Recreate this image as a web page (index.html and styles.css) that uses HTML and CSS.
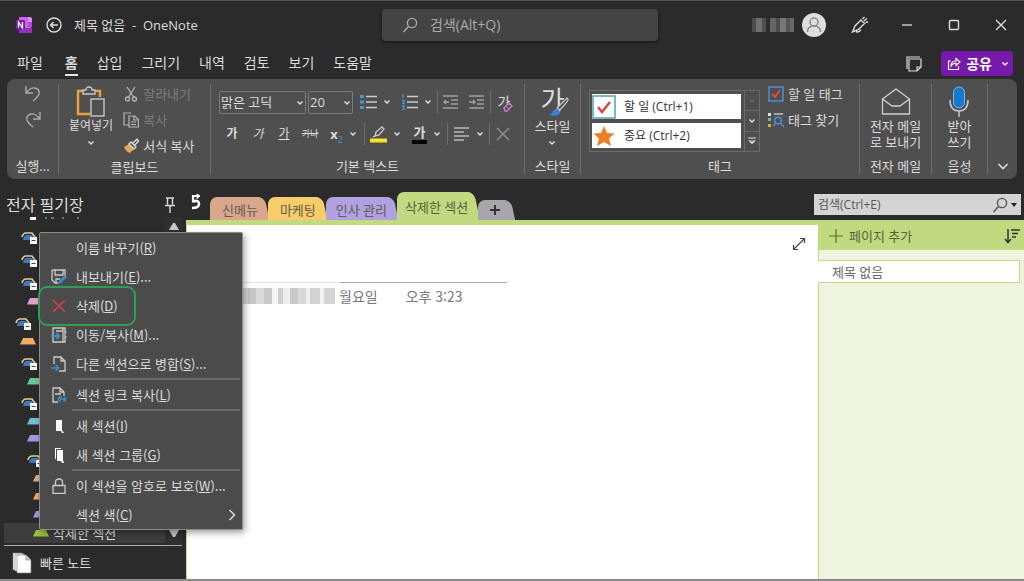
FILE: index.html
```html
<!DOCTYPE html>
<html lang="ko">
<head>
  <meta charset="UTF-8" />
  <title>제목 없음 - OneNote</title>
  <link rel="stylesheet" href="styles.css">
</head>
<body>

  <!-- shared symbols -->
  <svg class="defs" aria-hidden="true">
    <symbol id="chev" viewBox="0 0 8 8"><path d="M1.5 2.5 4 5l2.5-2.5" fill="none" stroke="currentColor" stroke-width="1.5"/></symbol>
    <symbol id="lens" viewBox="0 0 16 16"><circle cx="10" cy="6" r="4.6" fill="none" stroke="currentColor" stroke-width="1.4"/><path d="M6.7 9.3 1.5 15" fill="none" stroke="currentColor" stroke-width="1.5"/></symbol>
    <symbol id="group" viewBox="0 0 16 14"><path d="M1 6q1-4 4-4h6l3 4" fill="none" stroke="#e2cf8c" stroke-width="1.6"/><path d="M2 9q1-5 4-5h5l3 5z" fill="#3f78bd"/><rect x="9" y="6" width="7" height="7" fill="#fff"/><path d="M10.500 9.500h4" stroke="#444"/></symbol>
    <symbol id="section" viewBox="0 0 16 8"><path d="M0 7.500 3 1h10l3 6.500z" fill="currentColor"/></symbol>
  </svg>

  <div class="window">
    <header class="titlebar">
      <div class="title-left">
        <svg width="16" height="16" viewBox="0 0 16 16"><rect x="3" width="12" height="16" rx="1" fill="#ca64ea"/><path d="M12 0h2q2 0 2 2v3h-4z" fill="#d98df0"/><path d="M12 5h4v5h-4z" fill="#ae4bd5"/><path d="M3 11h13v4q0 1-1 1H4q-1 0-1-1z" fill="#9332bf"/><rect y="3" width="9" height="10" rx="1" fill="#7719aa"/><path d="M2.500 11V5l4 6V5" fill="none" stroke="#fff" stroke-width="1.300"/></svg>
        <button class="back" aria-label="뒤로"><svg width="16" height="16" viewBox="0 0 16 16" fill="none" stroke="currentColor" stroke-width="1.400"><circle cx="8" cy="8" r="7"/><path d="M12 8H4.500M7.500 5l-3 3 3 3"/></svg></button>
        <span>제목 없음 &nbsp;-&nbsp; OneNote</span>
      </div>
      <label class="top-search">
        <svg width="16" height="16"><use href="#lens"/></svg>
        <input type="text" placeholder="검색(Alt+Q)" aria-label="검색">
      </label>
      <div class="title-right">
        <span class="user-name"></span>
        <svg class="avatar" width="24" height="24" viewBox="0 0 24 24"><circle cx="12" cy="12" r="12" fill="#dedede"/><g fill="none" stroke="#8a8a8a" stroke-width="1.500"><circle cx="12" cy="9" r="4"/><path d="M5.500 19q0-6 6.500-6t6.500 6"/></g></svg>
        <button aria-label="펜"><svg width="18" height="18" viewBox="0 0 18 18" fill="none" stroke="currentColor" stroke-width="1.400"><path d="M1.500 16 4 10l6-6 3.500 3.500-6 6zM5 15.500q3 1.500 5-2M11.500 3l2-2M13 5l3-2.500M14.500 6.500 17 6"/></svg></button>
        <button aria-label="최소화"><svg width="12" height="12"><path d="M1 6h10" stroke="currentColor" stroke-width="1.300"/></svg></button>
        <button aria-label="최대화"><svg width="12" height="12"><rect x="1.500" y="1.500" width="9" height="9" rx="1" fill="none" stroke="currentColor" stroke-width="1.400"/></svg></button>
        <button aria-label="닫기"><svg width="12" height="12"><path d="m1 1 10 10M11 1 1 11" stroke="currentColor" stroke-width="1.400"/></svg></button>
      </div>
    </header>

    <nav class="menubar">
      <a href="#">파일</a>
      <a href="#" class="active">홈</a>
      <a href="#">삽입</a>
      <a href="#">그리기</a>
      <a href="#">내역</a>
      <a href="#">검토</a>
      <a href="#">보기</a>
      <a href="#">도움말</a>
      <button class="feed" aria-label="메모"><svg width="16" height="16" viewBox="0 0 16 16" fill="none" stroke="currentColor" stroke-width="1.200"><path d="M1 13V1h13"/><path d="M3 3h12v8l-4 4H3zM15 11h-4v4"/></svg></button>
      <button class="share"><svg width="14" height="14" viewBox="0 0 14 14" fill="none" stroke="currentColor" stroke-width="1.200"><path d="M4 4H1.500v8.500h10V9M4 9q0-5 5-5V1.500L13 5 9 8.500V6Q6 6 4 9z"/></svg>공유<svg class="share-chev" width="8" height="8"><use href="#chev"/></svg></button>
    </nav>

    <section class="ribbon">
      <div class="group undo-group">
        <div class="tools undo-tools">
          <button class="dim" aria-label="실행 취소"><svg width="16" height="18" viewBox="0 0 16 18" fill="none" stroke="currentColor" stroke-width="1.400"><path d="M1 1v7h7M1.500 7.500Q6 2 10 3q5 1.500 4 6-1 3-6 7"/></svg></button>
          <button class="dim" aria-label="다시 실행"><svg width="16" height="18" viewBox="0 0 16 18" fill="none" stroke="currentColor" stroke-width="1.400"><path d="M15 1v7H8M14.500 7.500Q10 2 6 3 1 4.500 2 9q1 3 6 7"/></svg></button>
        </div>
        <div class="caption">실행...</div>
      </div>

      <div class="group clip-group">
        <div class="tools">
          <button class="big paste"><svg width="30" height="32" viewBox="0 0 30 32" fill="none"><path d="M7 5H2v23h12M19 5h5v6" stroke="#e8a33d" stroke-width="2.400"/><path d="M7 8V4h3q0-3 3-3t3 3h3v4z" stroke="#c8c8c8" stroke-width="1.300"/><rect x="15" y="13" width="13" height="17" stroke="#c8c8c8" stroke-width="1.400"/></svg><span>붙여넣기</span><svg width="8" height="8"><use href="#chev"/></svg></button>
          <div class="rows">
            <button class="row-btn off"><svg width="16" height="16" viewBox="0 0 16 16" fill="none" stroke="#b5b5b5" stroke-width="1.300"><path d="m4 1 6.500 10M12 1 5.500 11"/><circle cx="4.500" cy="13" r="2"/><circle cx="11.500" cy="13" r="2"/></svg>잘라내기</button>
            <button class="row-btn off"><svg width="16" height="16" viewBox="0 0 16 16" fill="none" stroke="#b5b5b5" stroke-width="1.200"><path d="M6 13H1V1h7M6 4h6l3.500 3.500V15H6zM11 4v4h4M8 10h5M8 12.500h5"/></svg>복사</button>
            <button class="row-btn"><svg width="16" height="16" viewBox="0 0 16 16"><path d="m1 9 5-3 5 5-4 4Q3 14 1 9z" fill="#e9a45a"/><path d="M6 6 8 4l5 5-2 2zM10 5l4-4 1.500 2L12 7" fill="none" stroke="#ddd" stroke-width="1.300"/></svg>서식 복사</button>
          </div>
        </div>
        <div class="caption">클립보드</div>
      </div>

      <div class="group text-group">
        <div class="tools text-tools">
          <div class="line">
            <span class="pick font"><select aria-label="글꼴"><option>맑은 고딕</option></select><svg width="8" height="8"><use href="#chev"/></svg></span>
            <span class="pick size"><select aria-label="글꼴 크기"><option>20</option></select><svg width="8" height="8"><use href="#chev"/></svg></span>
            <button class="split" aria-label="글머리 기호"><svg width="17" height="16" viewBox="0 0 17 16"><path d="M0 1h4v3H0zM0 6.500h4v3H0zM0 12h4v3H0z" fill="#4a94d0"/><path d="M6 2.500h11M6 8h11M6 13.500h11" stroke="#ccc" stroke-width="1.400"/></svg><svg width="8" height="8"><use href="#chev"/></svg></button>
            <button class="split" aria-label="번호 매기기"><svg width="17" height="16" viewBox="0 0 17 16"><path d="M2 0v4M1 6.500h2v3H1M1 12h2v3.500H1" fill="none" stroke="#4a94d0" stroke-width="1.400"/><path d="M6 2.500h11M6 8h11M6 13.500h11" stroke="#ccc" stroke-width="1.400"/></svg><svg width="8" height="8"><use href="#chev"/></svg></button>
            <i class="bar"></i>
            <button class="tool" aria-label="내어쓰기"><svg width="16" height="14" viewBox="0 0 16 14" fill="none" stroke="#a0a0a0" stroke-width="1.300"><path d="M0 1h15M8 5h7M8 9h7M0 13h15M6 7H1M3 5 1 7l2 2"/></svg></button>
            <button class="tool" aria-label="들여쓰기"><svg width="16" height="14" viewBox="0 0 16 14" fill="none" stroke="#a0a0a0" stroke-width="1.300"><path d="M0 1h15M8 5h7M8 9h7M0 13h15M0 7h6M4 5l2 2-2 2"/></svg></button>
            <i class="bar"></i>
            <button class="tool clear" aria-label="서식 지우기">가<svg width="10" height="10" viewBox="0 0 10 10"><path d="m1 6 5-5 3 3-5 5H2z" fill="#4f4f4f" stroke="#c07bd0" stroke-width="1.500"/><path d="m3 4 3 3" stroke="#c07bd0"/></svg></button>
          </div>
          <div class="line">
            <button class="tool"><b>가</b></button>
            <button class="tool"><em>가</em></button>
            <button class="tool"><u>가</u></button>
            <button class="tool tiny"><s>가나</s></button>
            <button class="split sub"><span><b>x</b><sub>2</sub></span><svg width="8" height="8"><use href="#chev"/></svg></button>
            <i class="bar"></i>
            <button class="split" aria-label="강조색"><svg width="17" height="17" viewBox="0 0 17 17"><path d="m5 10 1-4 6-5 2 2-5 6-4 1zM3 11l2-1" fill="none" stroke="#ccc" stroke-width="1.300"/><path d="M0 12.500h17v4H0z" fill="#f5e61c"/></svg><svg width="8" height="8"><use href="#chev"/></svg></button>
            <button class="split color"><span>가</span><svg width="8" height="8"><use href="#chev"/></svg></button>
            <i class="bar"></i>
            <button class="split" aria-label="맞춤"><svg width="17" height="16" viewBox="0 0 17 16"><path d="M1 2h15M1 6h10M1 10h15M1 14h10" stroke="#bbb" stroke-width="1.400"/></svg><svg width="8" height="8"><use href="#chev"/></svg></button>
            <i class="bar"></i>
            <button class="tool" aria-label="삭제"><svg width="14" height="14"><path d="m1 1 12 12M13 1 1 13" stroke="#929292" stroke-width="1.400"/></svg></button>
          </div>
        </div>
        <div class="caption">기본 텍스트</div>
      </div>

      <div class="group style-group">
        <div class="tools">
          <button class="big"><span class="style-icon">가<svg width="20" height="20" viewBox="0 0 20 20"><path d="M8 11 18 1q2 1 0 4l-7 8z" fill="#4f4f4f" stroke="#ccc" stroke-width="1.200"/><path d="M0 18q3-1 4-4 2-4 6-1 2 3-1 5-3 2-9 0z" fill="#3583cd"/></svg></span><span>스타일</span><svg width="8" height="8"><use href="#chev"/></svg></button>
        </div>
        <div class="caption">스타일</div>
      </div>

      <div class="group tag-group">
        <div class="tools tag-tools">
          <div class="gallery">
            <div class="gallery-items">
              <button><svg width="24" height="24" viewBox="0 0 24 24"><rect x="1" y="1" width="22" height="22" fill="#fff" stroke="#4fa3ae" stroke-width="1.500"/><path d="m6 12 4 5 8-10" fill="none" stroke="#d64545" stroke-width="2.400"/></svg>할 일 (Ctrl+1)</button>
              <button><svg width="24" height="24" viewBox="0 0 24 24"><path d="m12 2 3 7 7.500.5-5.500 5 2 7.500-7-4-7 4 2-7.500-5.500-5L9 9z" fill="#ee8022"/></svg>중요 (Ctrl+2)</button>
            </div>
            <div class="gallery-nav">
              <button class="off" aria-label="위"><svg width="8" height="8"><path d="M2 5l2-2 2 2" fill="none" stroke="currentColor"/></svg></button>
              <button aria-label="아래"><svg width="8" height="8"><use href="#chev"/></svg></button>
              <button aria-label="더 보기"><svg width="8" height="8" viewBox="0 0 8 8"><path d="M0 1h8M1.500 4h5L4 6.500z" fill="none" stroke="currentColor" stroke-width="1.200"/></svg></button>
            </div>
          </div>
          <div class="rows">
            <button class="row-btn"><svg width="16" height="16" viewBox="0 0 16 16" fill="none"><rect x="1" y="1" width="14" height="14" stroke="#4a90d9" stroke-width="1.500"/><path d="m4 8 3 3 5-7" stroke="#d9503f" stroke-width="2"/></svg>할 일 태그</button>
            <button class="row-btn"><svg width="16" height="16" viewBox="0 0 16 16"><path d="M0 1h3v3H0z" fill="#ddd"/><path d="M0 6h3v3H0z" fill="#6db5a5"/><path d="M0 12h3v3H0z" fill="#e8a33d"/><path d="M6 2h9" stroke="#ccc" stroke-width="1.400"/><circle cx="10" cy="8.500" r="3.300" fill="none" stroke="#4a90d9" stroke-width="1.500"/><path d="m12.500 11 3.500 4M5 14l3-3" stroke="#4a90d9" stroke-width="1.500"/></svg>태그 찾기</button>
          </div>
        </div>
        <div class="caption">태그</div>
      </div>

      <div class="group mail-group">
        <div class="tools">
          <button class="big"><svg width="30" height="32" viewBox="0 0 30 32" fill="none" stroke="#d0d0d0" stroke-width="1.300"><path d="M1.500 13 15 3l13.500 10v15h-27zM1.500 13 11 20h8l9.500-7"/></svg><span>전자 메일<br>로 보내기</span></button>
        </div>
        <div class="caption">전자 메일</div>
      </div>

      <div class="group voice-group">
        <div class="tools">
          <button class="big"><svg width="22" height="32" viewBox="0 0 22 32"><rect x="5.500" y="1" width="11" height="21" rx="5.500" fill="#1678cf" stroke="#7fb6e6"/><path d="M2 14q0 11 9 11t9-11M11 25v6" fill="none" stroke="#c8c8c8" stroke-width="1.500"/></svg><span>받아<br>쓰기</span></button>
        </div>
        <div class="caption">음성</div>
      </div>

      <button class="collapse" aria-label="리본 축소"><svg width="12" height="12" viewBox="0 0 12 12"><path d="m1.500 4 4.500 4.500L10.500 4" fill="none" stroke="currentColor" stroke-width="1.600"/></svg></button>
    </section>

    <div class="workspace">
      <aside class="sidebar">
        <div class="side-head">
          <h1>전자 필기장</h1>
          <svg width="12" height="16" viewBox="0 0 12 16" fill="none" stroke="currentColor" stroke-width="1.400"><path d="M2 1h8M3.500 1v6.500M8.500 1v6.500M1 8.500h10M6 9v7"/></svg>
        </div>
        <div class="tree">
          <ul>
            <li class="cut"><svg width="56" height="4"><path d="M1 0h6v3H1z" fill="#fff"/><path d="M16 1h2M22 1h3M34 0v2M49 0v2" stroke="#bbb"/></svg></li>
            <li class="g"><svg width="16" height="14"><use href="#group"/></svg></li>
            <li class="g"><svg width="16" height="14"><use href="#group"/></svg></li>
            <li class="g"><svg width="16" height="14"><use href="#group"/></svg></li>
            <li class="pink"><svg width="16" height="8"><use href="#section"/></svg></li>
            <li class="g book"><svg width="16" height="14"><use href="#group"/></svg></li>
            <li class="amber book"><svg width="16" height="8"><use href="#section"/></svg></li>
            <li class="g"><svg width="16" height="14"><use href="#group"/></svg></li>
            <li class="green"><svg width="16" height="8"><use href="#section"/></svg></li>
            <li class="g"><svg width="16" height="14"><use href="#group"/></svg></li>
            <li class="cyan"><svg width="16" height="8"><use href="#section"/></svg></li>
            <li class="violet"><svg width="16" height="8"><use href="#section"/></svg></li>
            <li class="g deep"><svg width="16" height="14"><use href="#group"/></svg></li>
            <li class="tan deep"><svg width="16" height="8"><use href="#section"/></svg></li>
            <li class="amber deep"><svg width="16" height="8"><use href="#section"/></svg></li>
            <li class="violet deep"><svg width="16" height="8"><use href="#section"/></svg></li>
            <li class="lime deep selected"><svg width="16" height="8"><use href="#section"/></svg>삭제한 섹션</li>
          </ul>
          <div class="scroller">
            <svg width="10" height="7"><path d="M0 7 4 0h2l4 7z" fill="#c8c8c8"/></svg>
            <svg width="10" height="7"><path d="M0 0h10L6 7H4z" fill="#c8c8c8"/></svg>
          </div>
        </div>
        <a href="#" class="quick"><svg width="20" height="22" viewBox="0 0 20 22" fill="#fff" stroke="#777" stroke-width=".6"><path d="M1 1h9l4 4v13H1z"/><path d="M3 2h9l4 4v13H3z"/><path d="M5 3h9l5 5v13H5z"/><path d="M14 3v5h5" fill="#ccc"/></svg>빠른 노트</a>

        <div class="context-menu" role="menu">
          <button>이름 바꾸기(<u>R</u>)</button>
          <button><svg width="16" height="16" viewBox="0 0 16 16"><path d="M1 1h13v7M1 1v10l3 3h3M4 1v5h8V1M5 14v-4h4" fill="none" stroke="#ccc" stroke-width="1.300"/><path d="m7 15 1-3 6-6 2 2-6 6z" fill="#3d8fc6"/></svg>내보내기(<u>E</u>)...</button>
          <button class="picked"><svg width="16" height="16"><path d="m2 2 12 12M14 2 2 14" stroke="#d9414e" stroke-width="1.500"/></svg>삭제(<u>D</u>)</button>
          <button><svg width="16" height="16" viewBox="0 0 16 16" fill="none"><path d="M2 1h12v14H2zM5 4h7M12 1v14M14 5h1.500M14 10h1.500" stroke="#ccc" stroke-width="1.300"/><path d="M0 9h8M5.500 6 8.500 9l-3 3" stroke="#3d8fc6" stroke-width="1.800"/></svg>이동/복사(<u>M</u>)...</button>
          <button><svg width="16" height="16" viewBox="0 0 16 16" fill="none"><path d="M3 8V1h7l4 4v10H8M10 1v4h4" stroke="#ccc" stroke-width="1.300"/><path d="M0 12h7M4.500 9l3 3-3 3" stroke="#3d8fc6" stroke-width="1.600"/></svg>다른 섹션으로 병합(<u>S</u>)...</button>
          <hr>
          <button><svg width="16" height="16" viewBox="0 0 16 16" fill="none"><path d="M7 15H2V1h7l4 4v4M9 1v4h4M4 7h6" stroke="#ccc" stroke-width="1.300"/><path d="M10 14H8.500q-2-2 0-4H11M12 14h1.500q2-2 0-4M9 12h5" stroke="#3d8fc6" stroke-width="1.600"/></svg>섹션 링크 복사(<u>L</u>)</button>
          <hr>
          <button><svg width="16" height="16"><path d="M5 2h6v10l2 3h-2l-1-2H5z" fill="#fff"/></svg>새 섹션(<u>I</u>)</button>
          <button><svg width="16" height="16"><path d="M4 1h6v1H5v10H4z" fill="#fff"/><path d="M6 3h6v10l1 3h-2l-1-2H6z" fill="#fff"/></svg>새 섹션 그룹(<u>G</u>)</button>
          <hr>
          <button><svg width="16" height="16" viewBox="0 0 16 16" fill="none" stroke="#ccc" stroke-width="1.300"><path d="M2 7.500h12v8H2zM4.500 7.500V4q0-3 3.500-3t3.500 3v3.500"/></svg>이 섹션을 암호로 보호(<u>W</u>)...</button>
          <button>섹션 색(<u>C</u>)<svg class="more" width="8" height="12"><path d="m1.500 1 5 5-5 5" fill="none" stroke="currentColor" stroke-width="1.500"/></svg></button>
        </div>
      </aside>

      <main class="notebook">
        <div class="section-bar">
          <svg class="up" width="12" height="16" viewBox="0 0 12 16" fill="none" stroke="#fff"><path d="M3 7.500Q9 5.500 9 10q0 4-7 4" stroke-width="2.600"/><path d="M3 8.500V2h6" stroke-width="2.200"/><path d="m7 0 3 2-3 2.500z" fill="#fff"/></svg>
          <button class="tab tan-tab">신메뉴</button>
          <button class="tab gold-tab">마케팅</button>
          <button class="tab violet-tab">인사 관리</button>
          <button class="tab current">삭제한 섹션</button>
          <button class="tab add" aria-label="새 섹션"><svg width="10" height="10"><path d="M5 0v10M0 5h10" stroke="#333" stroke-width="2"/></svg></button>
          <label class="page-search">
            <input type="text" placeholder="검색(Ctrl+E)" aria-label="페이지 검색">
            <svg width="16" height="16"><use href="#lens"/></svg>
            <svg width="6" height="4"><path d="M0 0h6L3 4z" fill="#222"/></svg>
          </label>
        </div>
        <div class="content">
          <article class="page">
            <button class="expand" aria-label="전체 화면"><svg width="14" height="14" viewBox="0 0 14 14" fill="none" stroke="#444" stroke-width="1.200"><path d="M1.500 12.500 12.500 1.500M8 1.500h4.500V6M1.500 8v4.500H6"/></svg></button>
            <div class="note-title"></div>
            <div class="note-date"><span class="hidden-date"></span><span>월요일</span><time>오후 3:23</time></div>
          </article>
          <aside class="pages">
            <div class="pages-head">
              <button><svg width="14" height="14"><path d="M7 0v14M0 7h14" stroke="#5d6b35" stroke-width="1.200"/></svg>페이지 추가</button>
              <button aria-label="정렬"><svg width="16" height="16" viewBox="0 0 16 16" fill="none" stroke="#333" stroke-width="1.500"><path d="M4 1v13M1 11l3 3.500L7 11M7 2h9M8 5.500h6M8 9h4"/></svg></button>
            </div>
            <a href="#" class="page-item">제목 없음</a>
          </aside>
        </div>
      </main>
    </div>
  </div>

</body>
</html>
```
FILE: styles.css
```css
*, *::before, *::after { box-sizing: border-box; }
body {
  margin: 0;
  background: #2b2b2b;
  color: #dcdcdc;
  font: 13px/16px "Open Sans", "Noto Sans CJK KR", sans-serif;
}
button, input, select {
  font: inherit;
  color: inherit;
  background: none;
  border: none;
  padding: 0;
  margin: 0;
}
a { color: inherit; text-decoration: none; }
svg { flex: none; display: block; }
.defs { position: absolute; width: 0; height: 0; }

.window {
  min-height: 100vh;
  display: flex;
  flex-direction: column;
  border-top: 1px solid #555;
  border-bottom: 2px solid #8a8a8a;
}

/* title bar */
.titlebar {
  display: grid;
  grid-template-columns: 382fr 276fr 366fr;
  align-items: center;
  height: 47px;
}
.title-left { display: flex; align-items: center; gap: 12px; padding-left: 16px; white-space: nowrap; }
.title-left .back { margin-left: 2px; }
.top-search {
  display: flex;
  align-items: center;
  gap: 12px;
  height: 32px;
  padding-left: 20px;
  background: #444;
  border-radius: 4px;
  box-shadow: 0 1px 3px #111;
  color: #aaa;
}
.top-search input { width: 100%; outline: none; font-size: 14px; }
input::placeholder { color: inherit; opacity: 1; }
.title-right { display: flex; align-items: center; justify-content: flex-end; }
.title-right button { width: 47px; height: 32px; display: flex; align-items: center; justify-content: center; }
.user-name {
  width: 42px;
  height: 14px;
  margin-right: 8px;
  background: linear-gradient(90deg, #4c4c4c 0 4px, #707070 4px 10px, #505050 10px 14px, #2e2e2e 14px 18px, #666 18px 24px, #4c4c4c 24px 28px, #777 28px 34px, #555 34px 38px, #686868 38px);
}
.avatar { margin-right: 10px; }

/* menu */
.menubar {
  display: flex;
  align-items: center;
  gap: 19px;
  height: 31px;
  padding: 0 11px 0 17px;
  font-size: 14px;
  white-space: nowrap;
}
.menubar a { padding: 4px 0 3px; border-bottom: 2px solid transparent; }
.menubar a:first-child { margin-right: 3px; }
.menubar .active { font-weight: bold; border-color: #e4e4e4; }
.feed { margin-left: auto; }
.share {
  display: flex;
  align-items: center;
  gap: 5px;
  height: 25px;
  padding: 0 4px 0 6px;
  border-radius: 4px;
  background: #7719aa;
  color: #fff;
  font-weight: bold;
}
.share-chev { margin-left: 4px; }

/* ribbon */
.ribbon {
  display: flex;
  height: 100px;
  margin: 0 7px;
  padding: 5px 0;
  background: #4f4f4f;
  border-radius: 8px;
}
.group {
  flex: none;
  display: flex;
  flex-direction: column;
  border-right: 1px solid #6e6e6e;
  white-space: nowrap;
}
.tools { flex: 1; display: flex; justify-content: center; }
.caption { height: 16px; text-align: center; }
.undo-group { width: 52px; }
.clip-group { width: 152px; }
.text-group { width: 314px; }
.style-group { width: 56px; }
.tag-group { flex: 1 0 279px; }
.mail-group { width: 72px; }
.voice-group { width: 56px; }

.undo-tools { flex-direction: column; justify-content: flex-start; align-items: center; gap: 8px; padding-top: 1px; }
.dim { color: #aaa; }
.big {
  display: flex;
  flex-direction: column;
  align-items: center;
  padding-top: 2px;
  line-height: 16px;
}
.big span + svg { margin-top: 5px; }
.paste { font-size: 12px; margin-right: 10px; position: relative; }
.clip-group .tools { justify-content: flex-start; padding-left: 10px; }
.rows { display: flex; flex-direction: column; margin-top: -3px; }
.row-btn { display: flex; align-items: center; gap: 4px; height: 26px; }
.off { color: #7d7d7d; }

.text-tools { flex-direction: column; justify-content: flex-start; gap: 8px; padding: 6px 0 0 8px; }
.line { display: flex; align-items: center; height: 24px; }
.pick { position: relative; height: 23px; margin-right: 2px; }
.pick select {
  width: 100%;
  height: 23px;
  padding-left: 1px;
  appearance: none;
  border: 1px solid #7c7c7c;
  border-radius: 2px;
}
.pick svg { position: absolute; right: 2px; top: 8px; pointer-events: none; }
.font { width: 87px; }
.size { width: 45px; }
.split { width: 41px; display: flex; align-items: center; justify-content: center; gap: 6px; }
.tool { width: 26px; display: flex; align-items: center; justify-content: center; font-size: 12px; }
.tiny { font-size: 9px; }
.bar { width: 1px; height: 22px; background: #6e6e6e; }
.clear { position: relative; font-size: 14px; }
.clear svg { position: absolute; right: 4px; bottom: -2px; }
.sub sub { color: #4a94d0; font-size: 9px; line-height: 0; }
.color span { line-height: 15px; border-bottom: 4px solid #000; padding: 0 2px; font-weight: bold; }

.style-icon { position: relative; width: 30px; height: 32px; font-size: 26px; line-height: 28px; }
.style-icon svg { position: absolute; right: -2px; bottom: 1px; }
.tag-tools { justify-content: flex-start; padding-left: 8px; }
.gallery {
  display: flex;
  width: 171px;
  height: 62px;
  margin: 6px 8px 0 0;
  border: 1px solid #6b6b6b;
}
.gallery-items { flex: 1; display: flex; flex-direction: column; gap: 4px; padding: 3px 3px 3px 2px; }
.gallery-items button {
  display: flex;
  align-items: center;
  gap: 8px;
  height: 25px;
  background: #fff;
  color: #333;
  font-size: 12px;
}
.gallery-nav { width: 15px; display: flex; flex-direction: column; border-left: 1px solid #6b6b6b; }
.gallery-nav button { flex: 1; display: flex; align-items: center; justify-content: center; }
.gallery-nav button + button { border-top: 1px solid #6b6b6b; }
.collapse { width: 30px; display: flex; align-items: flex-end; justify-content: center; padding-bottom: 2px; }

/* notebook list */
.workspace { flex: 1; display: flex; }
.sidebar { position: relative; width: 186px; flex: none; display: flex; flex-direction: column; }
.side-head { display: flex; align-items: center; justify-content: space-between; height: 38px; padding: 14px 10px 0 6px; }
.side-head h1 { margin: 0; font-size: 16px; font-weight: normal; }
.tree { flex: 1; display: flex; margin: 0 4px; border-bottom: 1px solid #aaa; }
.tree ul { flex: 1; margin: 0; padding: 0; list-style: none; }
.tree li { display: flex; align-items: center; gap: 4px; height: 17px; padding-left: 23px; }
.tree .cut { height: 6px; padding-left: 25px; align-items: flex-start; }
.tree .g { height: 23px; padding: 6px 0 0 17px; }
.tree .book { padding-left: 16px; }
.tree .g.book { padding-left: 11px; }
.tree .deep { padding-left: 29px; height: 18px; }
.tree .g.deep { padding-left: 23px; height: 23px; }
.tree .selected { height: 20px; background: #3d3d3d; }
.pink { color: #e4a0cc; }
.amber { color: #f0ac62; }
.green { color: #6fc497; }
.cyan { color: #71bfd1; }
.violet { color: #9a9ae0; }
.tan { color: #d8ad8e; }
.lime svg { color: #9bc23c; }
.scroller {
  width: 17px;
  display: flex;
  flex-direction: column;
  justify-content: space-between;
  align-items: center;
  padding: 6px 0 8px;
  background: #303030;
}
.quick { display: flex; align-items: center; gap: 8px; height: 33px; padding-left: 12px; }

.context-menu {
  position: absolute;
  z-index: 5;
  left: 39px;
  top: 53px;
  width: 204px;
  background: #4b4b4b;
  border: 1px solid #8c8c8c;
  border-radius: 2px;
  box-shadow: 2px 3px 6px rgba(0, 0, 0, .35);
  font-family: "Noto Sans CJK KR", sans-serif;
}
.context-menu button {
  display: flex;
  align-items: center;
  width: 100%;
  height: 29px;
  padding-left: 36px;
  white-space: nowrap;
}
.context-menu button > svg:first-child { margin: 0 9px 0 -25px; }
.context-menu hr { height: 2px; margin: 0 2px 0 32px; border: none; background: #696969; }
.context-menu .picked { position: relative; }
.picked::after {
  content: "";
  position: absolute;
  left: -2px;
  top: -5px;
  width: 98px;
  height: 40px;
  border: 2px solid #2f9e57;
  border-radius: 9px;
}
.context-menu .more { margin: 0 6px 0 auto; }

/* section tabs */
.notebook { flex: 1; display: flex; flex-direction: column; min-width: 0; }
.section-bar { display: flex; align-items: flex-end; height: 41px; padding: 0 3px 0 4px; }
.up { margin: 0 8px 10px 0; }
.tab {
  position: relative;
  isolation: isolate;
  height: 23px;
  padding: 2px 6px 0 12px;
  margin-right: 4px;
  border-radius: 7px 7px 0 0;
  background: var(--c);
  color: #66594f;
  white-space: nowrap;
}
.tab::after {
  content: "";
  position: absolute;
  z-index: -1;
  right: -3px;
  top: 0;
  width: 16px;
  height: 100%;
  border-radius: 0 7px 0 0;
  background: var(--c);
  transform: skewX(12deg);
}
.tan-tab { --c: #d8a78c; }
.gold-tab { --c: #f7cd6c; }
.violet-tab { --c: #b1a1e0; padding-left: 10px; }
.current { --c: #c1d97f; height: 28px; color: #56633a; padding-left: 8px; }
.add { --c: #a8a5ac; height: 20px; padding: 0 10px 0 12px; }
.page-search {
  display: flex;
  align-items: center;
  gap: 3px;
  width: 207px;
  height: 21px;
  margin: 0 0 5px auto;
  padding: 0 4px;
  background: #d4d4d4;
  color: #555;
}
.page-search input { flex: 1; min-width: 0; outline: none; font-size: 12px; }

/* page */
.content { flex: 1; display: flex; border-top: 5px solid #c1d97f; border-left: 1px solid #c1d97f; }
.page { position: relative; flex: 1; background: #fff; color: #777; padding-left: 53px; }
.expand { position: absolute; right: 12px; top: 12px; }
.note-title {
  width: 267px;
  height: 58px;
  background: linear-gradient(90deg, #e4e4e4 0 100px, #a8a8a8 100px) bottom / 100% 1px no-repeat;
}
.note-date { display: flex; gap: 4px; padding-top: 5px; font: 14px/16px "Noto Sans CJK KR", sans-serif; }
.note-date time { margin-left: 24px; }
.hidden-date {
  width: 95px;
  height: 16px;
  background: linear-gradient(90deg, #d5d5d5 0 8px, #c6c6c6 8px 16px, #dadada 16px 24px, #c9c9c9 24px 32px, #f4f4f4 32px 38px, #cfcfcf 38px 43px, #eee 43px 50px, #c9c9c9 50px 58px, #d8d8d8 58px 66px, #eee 66px 70px, #d2d2d2 70px 80px, #f2f2f2 80px 84px, #d4d4d4 84px);
}
.pages { width: 206px; flex: none; background: #eff4e0; border-left: 1px solid #c1d97f; }
.pages-head {
  display: flex;
  justify-content: space-between;
  align-items: center;
  height: 25px;
  padding: 0 4px 3px 10px;
  background: #c1d97f;
  color: #56633a;
}
.pages-head button { display: flex; align-items: center; gap: 6px; }
.page-item {
  display: block;
  height: 23px;
  margin: 10px 4px 0 -1px;
  padding: 3px 14px;
  background: #fff;
  border: 1px solid #c1d97f;
  border-left: none;
  color: #666;
}
```
